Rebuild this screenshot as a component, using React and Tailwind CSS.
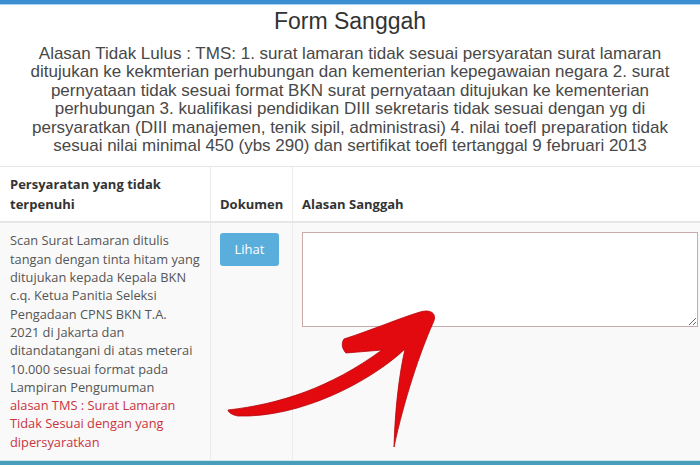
import React from 'react';

const alasan = [
  'Alasan Tidak Lulus : TMS: 1. surat lamaran tidak sesuai persyaratan surat lamaran',
  'ditujukan ke kekmterian perhubungan dan kementerian kepegawaian negara 2. surat',
  'pernyataan tidak sesuai format BKN surat pernyataan ditujukan ke kementerian',
  'perhubungan 3. kualifikasi pendidikan DIII sekretaris tidak sesuai dengan yg di',
  'persyaratkan (DIII manajemen, tenik sipil, administrasi) 4. nilai toefl preparation tidak',
  'sesuai nilai minimal 450 (ybs 290) dan sertifikat toefl tertanggal 9 februari 2013',
];

const syarat = [
  'Scan Surat Lamaran ditulis',
  'tangan dengan tinta hitam yang',
  'ditujukan kepada Kepala BKN',
  'c.q. Ketua Panitia Seleksi',
  'Pengadaan CPNS BKN T.A.',
  '2021 di Jakarta dan',
  'ditandatangani di atas meterai',
  '10.000 sesuai format pada',
  'Lampiran Pengumuman',
];

const tms = ['alasan TMS : Surat Lamaran', 'Tidak Sesuai dengan yang', 'dipersyaratkan'];

const Arrow = () => (
  <svg className="absolute left-0 top-0 pointer-events-none" width="700" height="467" viewBox="0 0 700 467">
    <path
      d="M228 410 C280 404 330 388 382 350 L346 353 C342 349 341 343 344 339 C372 330 400 318 420 312 C430 309 438 313 433 323 C420 352 404 400 394 447 C395 410 399 375 405 349 C370 382 300 418 238 416 C232 415 228 412 228 410 Z"
      fill="#e30a0f"
      stroke="#b3060a"
      strokeWidth="0.8"
      strokeLinejoin="round"
    />
  </svg>
);

export default function App() {
  return (
    <div className="relative w-[700px] h-[467px] overflow-hidden bg-white font-['Liberation_Sans',Arial,sans-serif]">
      <div className="h-[4px] bg-[#3b8fd0]" />
      <div className="h-[1px] bg-[#a9d1ef]" />

      <h1 className="pt-[2px] text-center text-[23px] leading-[28px] text-[#333]">Form Sanggah</h1>

      <div className="mt-[10px] text-center text-[17px] leading-[18.4px] text-[#484848]">
        {alasan.map((l) => (
          <div key={l} className="whitespace-nowrap">{l}</div>
        ))}
      </div>

      <div className="mt-[11px] font-['Open_Sans',sans-serif]">
        <div className="grid grid-cols-[210px_82px_1fr] h-[57px] border-t border-b-2 border-[#e6e6e6] bg-white text-[13px] leading-[20px] font-bold text-[#333]">
          <div className="flex flex-col justify-end px-[10px] pb-[7px]">
            <span>Persyaratan yang tidak</span>
            <span>terpenuhi</span>
          </div>
          <div className="flex flex-col justify-end border-l border-[#ececec] px-[9px] pb-[7px]">Dokumen</div>
          <div className="flex flex-col justify-end border-l border-[#ececec] px-[9px] pb-[7px]">Alasan Sanggah</div>
        </div>

        <div className="grid grid-cols-[210px_82px_1fr] h-[237px] bg-[#f9f9f9]">
          <div className="px-[10px] pt-[8px] text-[12.8px] leading-[18.3px] text-[#555]">
            {syarat.map((l) => (
              <div key={l} className="whitespace-nowrap">{l}</div>
            ))}
            {tms.map((l) => (
              <div key={l} className="whitespace-nowrap text-[#c9343f]">{l}</div>
            ))}
          </div>
          <div className="border-l border-[#ececec] pl-[9px] pt-[10px]">
            <button className="w-[59px] h-[33px] rounded-[3px] bg-[#5aaedc] text-[13px] text-white">Lihat</button>
          </div>
          <div className="border-l border-[#ececec] pl-[9px] pt-[9px]">
            <textarea className="block w-[396px] h-[95px] border border-[#c9abab] bg-white" />
          </div>
        </div>
      </div>

      <div className="h-[1px] bg-[#cfe6ee]" />
      <div className="h-[4px] bg-[#4a9db8]" />

      <Arrow />
    </div>
  );
}
